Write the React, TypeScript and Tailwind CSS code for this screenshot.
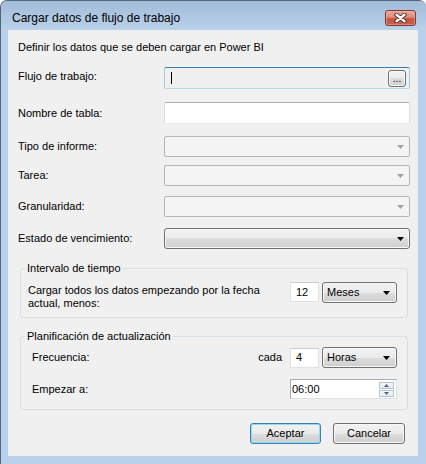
import React from "react";

const enabledBg =
  "bg-[linear-gradient(#f2f2f2_0%,#ebebeb_50%,#dddddd_50%,#cfcfcf_100%)]";

function Arrow({ color }: { color: string }) {
  return (
    <svg width="7" height="4" viewBox="0 0 7 4" className="shrink-0">
      <polygon points="0,0 7,0 3.5,4" fill={color} />
    </svg>
  );
}

function DisabledCombo() {
  return (
    <div className="w-[246px] h-[21px] rounded-[2px] border border-[#b2b6b9] bg-[#f4f4f4] flex items-center justify-end pr-[5px]">
      <Arrow color="#a3a3a3" />
    </div>
  );
}

function SmallCombo({ label }: { label: string }) {
  return (
    <div
      className={`w-[75px] h-[21px] rounded-[3px] border border-[#707070] ${enabledBg} shadow-[inset_0_0_0_1px_#f8f8f8] flex items-center justify-between pl-[4px] pr-[6px]`}
    >
      <span>{label}</span>
      <Arrow color="#000" />
    </div>
  );
}

function NumBox({ value }: { value: string }) {
  return (
    <div className="w-[29px] h-[20px] bg-white border border-[#dfe3e8] border-t-[#c9ccd2] flex items-center pl-[5px]">
      {value}
    </div>
  );
}

export default function App() {
  return (
    <div className="w-[426px] h-[464px] bg-white overflow-hidden font-['Liberation_Sans',Arial,sans-serif] text-[11px] leading-[13px] text-black">
      <div className="w-[426px] h-[464px] flex flex-col rounded-t-[7px] border-l border-t border-[#56647a] bg-[#b9d1ea]">
        {/* Title bar */}
        <div className="h-[29px] shrink-0 flex items-start justify-between rounded-t-[6px] bg-gradient-to-b from-[#a2bcd9] to-[#b9d1ea] pl-[11px] pr-[10px]">
          <span className="mt-[9px] text-[12px] leading-[16px] text-[#000]">
            Cargar datos de flujo de trabajo
          </span>
          <div className="mt-[9px] w-[31px] h-[16px] rounded-[3px] border border-[#7f3a32] bg-[linear-gradient(#e9a99b_0%,#dd8a7b_45%,#c9533f_55%,#c8604f_100%)] shadow-[inset_0_0_0_1px_#eeb6aa80] flex items-center justify-center">
            <svg width="13" height="10" viewBox="0 0 13 10">
              <path
                d="M2.5 1.8 L10.5 8.2 M10.5 1.8 L2.5 8.2"
                stroke="#4a2420"
                strokeWidth="4.2"
                strokeLinecap="round"
              />
              <path
                d="M2.5 1.8 L10.5 8.2 M10.5 1.8 L2.5 8.2"
                stroke="#ffffff"
                strokeWidth="2.4"
                strokeLinecap="round"
              />
            </svg>
          </div>
        </div>

        {/* Client area */}
        <div className="ml-[7px] mr-[8px] h-[426px] shrink-0 bg-[#f0f0f0] pl-[10px] flex flex-col">
          <div className="mt-[11px] h-[13px]">
            Definir los datos que se deben cargar en Power BI
          </div>

          {/* Flujo de trabajo */}
          <div className="mt-[13px] h-[22px] flex items-center">
            <div className="w-[146px] mb-[4px]">Flujo de trabajo:</div>
            <div className="w-[246px] h-[22px] rounded-[2px] border border-[#a4c9e3] border-t-[#3d7bad] border-b-[#b7d9ed] bg-[#f0f0f0] flex items-center justify-between pl-[6px] pr-[3px]">
              <div className="w-px h-[12px] bg-black" />
              <div
                className={`w-[18px] h-[17px] rounded-[3px] border border-[#707070] ${enabledBg} shadow-[inset_0_0_0_1px_#fafafa] flex items-end justify-center pb-[3px] text-[10px] leading-[8px] tracking-[0px]`}
              >
                ...
              </div>
            </div>
          </div>

          {/* Nombre de tabla */}
          <div className="mt-[13px] h-[22px] flex items-center">
            <div className="w-[146px]">Nombre de tabla:</div>
            <div className="w-[246px] h-[22px] rounded-[2px] border border-[#dbdfe6] border-t-[#abadb3] border-b-[#e3e9ef] bg-white" />
          </div>

          <div className="mt-[12px] h-[21px] flex items-center">
            <div className="w-[146px]">Tipo de informe:</div>
            <DisabledCombo />
          </div>
          <div className="mt-[8px] h-[21px] flex items-center">
            <div className="w-[146px]">Tarea:</div>
            <DisabledCombo />
          </div>
          <div className="mt-[10px] h-[21px] flex items-center">
            <div className="w-[146px]">Granularidad:</div>
            <DisabledCombo />
          </div>
          <div className="mt-[11px] h-[21px] flex items-center">
            <div className="w-[146px]">Estado de vencimiento:</div>
            <div
              className={`w-[246px] h-[21px] rounded-[3px] border border-[#707070] ${enabledBg} shadow-[inset_0_0_0_1px_#f8f8f8] flex items-center justify-end pr-[5px]`}
            >
              <Arrow color="#000" />
            </div>
          </div>

          {/* Intervalo de tiempo */}
          <fieldset className="mt-[13px] ml-[2px] w-[388px] border border-[#d5dfe5] rounded-[3px] p-0">
            <legend className="ml-[4px] px-[2px] h-[13px] leading-[13px]">
              Intervalo de tiempo
            </legend>
            <div className="h-[42px] flex items-start pl-[7px] pr-[10px] pt-[7px]">
              <div className="flex-1 mt-[2px]">
                Cargar todos los datos empezando por la fecha
                <br />
                actual, menos:
              </div>
              <NumBox value="12" />
              <div className="ml-[3px]">
                <SmallCombo label="Meses" />
              </div>
            </div>
          </fieldset>

          {/* Planificación de actualización */}
          <fieldset className="mt-[12px] ml-[2px] w-[388px] border border-[#d5dfe5] rounded-[3px] p-0">
            <legend className="ml-[4px] px-[2px] h-[13px] leading-[13px]">
              Planificación de actualización
            </legend>
            <div className="h-[66px] flex flex-col pl-[11px] pr-[10px] pt-[4px]">
              <div className="h-[21px] flex items-center">
                <div className="flex-1">Frecuencia:</div>
                <div className="mr-[8px]">cada</div>
                <NumBox value="4" />
                <div className="ml-[3px]">
                  <SmallCombo label="Horas" />
                </div>
              </div>
              <div className="mt-[11px] h-[20px] flex items-center">
                <div className="flex-1">Empezar a:</div>
                <div className="w-[107px] h-[20px] bg-white border border-[#dbdfe6] border-t-[#abadb3] border-l-[#abadb3] flex items-center justify-between pl-[1px] pr-[2px]">
                  <span>06:00</span>
                  <div className="flex flex-col gap-[1px]">
                    <div className="w-[15px] h-[7px] border border-[#b6c2cf] bg-[linear-gradient(#f6f8fa,#e4eaf0)] flex items-center justify-center">
                      <svg width="5" height="3" viewBox="0 0 5 3">
                        <polygon points="0,3 5,3 2.5,0" fill="#4c6a8c" />
                      </svg>
                    </div>
                    <div className="w-[15px] h-[7px] border border-[#b6c2cf] bg-[linear-gradient(#f6f8fa,#e4eaf0)] flex items-center justify-center">
                      <svg width="5" height="3" viewBox="0 0 5 3">
                        <polygon points="0,0 5,0 2.5,3" fill="#4c6a8c" />
                      </svg>
                    </div>
                  </div>
                </div>
              </div>
            </div>
          </fieldset>

          {/* Buttons */}
          <div className="mt-[13px] flex justify-end gap-[12px] pr-[13px]">
            <button
              className={`w-[71px] h-[21px] rounded-[3px] border border-[#3c7fb1] ${enabledBg} shadow-[inset_0_0_0_1px_#8fdcf7] flex items-center justify-center`}
            >
              Aceptar
            </button>
            <button
              className={`w-[72px] h-[21px] rounded-[3px] border border-[#707070] ${enabledBg} shadow-[inset_0_0_0_1px_#f8f8f8] flex items-center justify-center`}
            >
              Cancelar
            </button>
          </div>
        </div>
      </div>
    </div>
  );
}
